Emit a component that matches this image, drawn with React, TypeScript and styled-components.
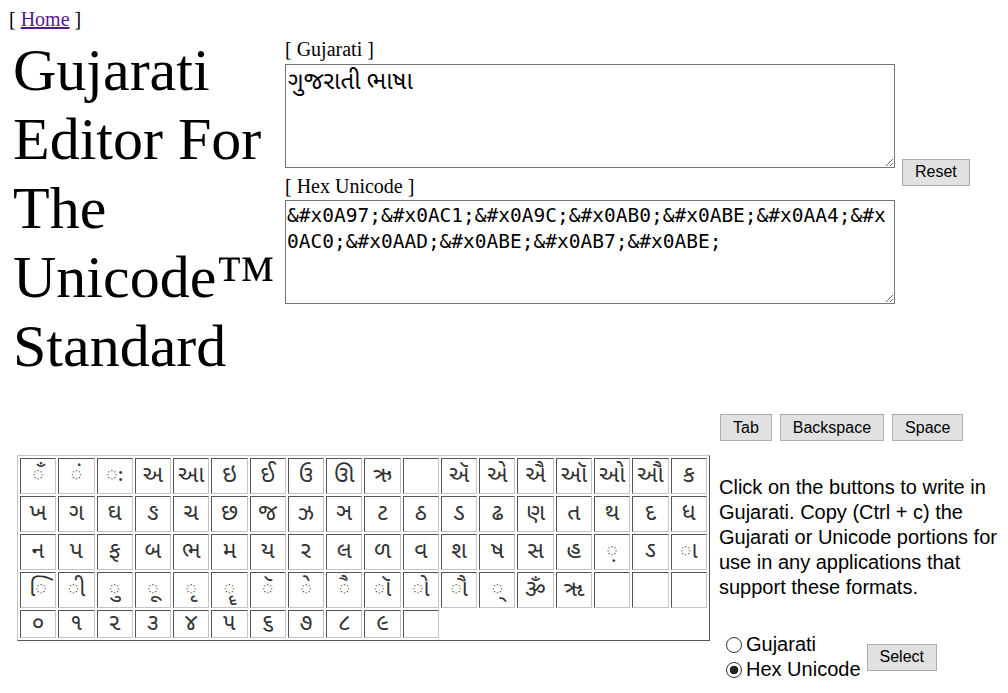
import React from 'react';
import styled, { createGlobalStyle } from 'styled-components';

const GlobalStyle = createGlobalStyle`
  html, body {
    margin: 0;
    padding: 0;
  }
  body {
    margin: 8px;
    font-family: "Liberation Serif", "Times New Roman", serif;
    font-size: 20px;
    color: #000;
    background: #fff;
  }
`;

const GUJ = '"Noto Sans Gujarati", "Lohit Gujarati", "Shruti", "Noto Sans", sans-serif';

const Nav = styled.div`
  line-height: 23px;
  padding-left: 1px;
`;

const HomeLink = styled.a`
  color: #551a8b;
  text-decoration: underline;
`;

const TopRow = styled.div`
  display: flex;
  align-items: flex-start;
  margin-top: 5px;
`;

const Title = styled.h1`
  margin: 0;
  width: 272px;
  padding-left: 5px;
  font-size: 60px;
  font-weight: normal;
  line-height: 69px;
`;

const EditorBlock = styled.div`
  display: flex;
  align-items: center;
  gap: 7px;
`;

const EditorColumn = styled.div`
  display: flex;
  flex-direction: column;
  padding-top: 2px;
  width: 610px;
`;

const FieldLabel = styled.div<{ $top?: number; $bottom?: number }>`
  line-height: 23px;
  margin-top: ${(p) => p.$top ?? 0}px;
  margin-bottom: ${(p) => p.$bottom ?? 3}px;
`;

const TextBox = styled.textarea<{ $mono?: boolean }>`
  display: block;
  box-sizing: border-box;
  width: 610px;
  height: 104px;
  margin: 0;
  padding: ${(p) => (p.$mono ? '2px 1px' : '2px')};
  border: 1px solid #767676;
  font-family: ${(p) => (p.$mono ? '"DejaVu Sans Mono", "Liberation Mono", monospace' : GUJ)};
  font-size: ${(p) => (p.$mono ? '19.5px' : '24px')};
  line-height: ${(p) => (p.$mono ? '26px' : '32px')};
  color: #000;
  word-break: break-all;
  resize: both;
`;

const Button = styled.button`
  box-sizing: border-box;
  height: 27px;
  padding: 0 12px;
  border: 1px solid #adadad;
  background: #e1e1e1;
  font-family: "Liberation Sans", Arial, sans-serif;
  font-size: 16px;
  color: #000;
  cursor: pointer;
`;

const ResetButton = styled(Button)`
  margin-top: 4px;
`;

const Lower = styled.div`
  display: grid;
  grid-template-columns: 693px 1fr;
  column-gap: 9px;
  row-gap: 14px;
  padding-left: 9px;
  margin-top: 33px;
`;

const KeyActions = styled.div`
  grid-column: 2;
  display: flex;
  gap: 8px;
  padding-left: 1px;
`;

const Keyboard = styled.table`
  width: 693px;
  table-layout: fixed;
  border-spacing: 2px;
  border-style: solid;
  border-width: 1px;
  border-color: #c4c4c4 #555 #555 #c4c4c4;
  align-self: start;
`;

const Key = styled.td<{ $short?: boolean }>`
  height: ${(p) => (p.$short ? 26 : 34)}px;
  padding: 0;
  border-style: solid;
  border-width: 1px;
  border-color: #555 #c4c4c4 #c4c4c4 #555;
  text-align: center;
  vertical-align: middle;
  font-family: ${GUJ};
  font-size: 23px;
  line-height: 26px;
  color: #333;
  cursor: pointer;
`;

const Side = styled.div`
  font-family: "Liberation Sans", Arial, sans-serif;
  font-size: 20px;
  line-height: 25px;
`;

const Help = styled.p`
  margin: 20px 0 0;
`;

const Output = styled.div`
  display: flex;
  align-items: center;
  gap: 6px;
  margin-top: 32px;
  padding-left: 7px;
`;

const RadioGroup = styled.div`
  display: flex;
  flex-direction: column;
`;

const RadioLabel = styled.label`
  display: flex;
  align-items: center;
  gap: 4px;
  height: 25px;
`;

const Radio = styled.input`
  appearance: none;
  box-sizing: border-box;
  width: 16px;
  height: 16px;
  margin: 0;
  border: 1px solid #333;
  border-radius: 50%;
  background: #fff;
  &:checked {
    background: radial-gradient(circle, #222 0 4px, #fff 4.6px);
  }
`;

const dc = '\u25CC';

const keys: string[][] = [
  [dc + 'ઁ', dc + 'ં', dc + 'ઃ', 'અ', 'આ', 'ઇ', 'ઈ', 'ઉ', 'ઊ', 'ઋ', '', 'ઍ', 'એ', 'ઐ', 'ઑ', 'ઓ', 'ઔ', 'ક'],
  ['ખ', 'ગ', 'ઘ', 'ઙ', 'ચ', 'છ', 'જ', 'ઝ', 'ઞ', 'ટ', 'ઠ', 'ડ', 'ઢ', 'ણ', 'ત', 'થ', 'દ', 'ધ'],
  ['ન', 'પ', 'ફ', 'બ', 'ભ', 'મ', 'ય', 'ર', 'લ', 'ળ', 'વ', 'શ', 'ષ', 'સ', 'હ', dc + '઼', 'ઽ', dc + 'ા'],
  [dc + 'િ', dc + 'ી', dc + 'ુ', dc + 'ૂ', dc + 'ૃ', dc + 'ૄ', dc + 'ૅ', dc + 'ે', dc + 'ૈ', dc + 'ૉ', dc + 'ો', dc + 'ૌ', dc + '્', 'ૐ', 'ૠ', '', '', ''],
  ['૦', '૧', '૨', '૩', '૪', '૫', '૬', '૭', '૮', '૯', ''],
];

const toHex = (s: string) =>
  Array.from(s)
    .filter((c) => c !== ' ')
    .map((c) => '&#x' + c.codePointAt(0)!.toString(16).toUpperCase().padStart(4, '0') + ';')
    .join('');

const App: React.FC = () => {
  const [text, setText] = React.useState('ગુજરાતી ભાષા');
  const [mode, setMode] = React.useState<'guj' | 'hex'>('hex');

  const press = (k: string) => setText((t) => t + k.replace(dc, ''));

  return (
    <>
      <GlobalStyle />
      <Nav>
        [ <HomeLink href="#">Home</HomeLink> ]
      </Nav>
      <TopRow>
        <Title>Gujarati Editor For The Unicode™ Standard</Title>
        <EditorBlock>
          <EditorColumn>
            <FieldLabel>[ Gujarati ]</FieldLabel>
            <TextBox value={text} onChange={(e) => setText(e.target.value)} />
            <FieldLabel $top={7} $bottom={2}>
              [ Hex Unicode ]
            </FieldLabel>
            <TextBox $mono readOnly value={toHex(text)} />
          </EditorColumn>
          <ResetButton onClick={() => setText('')}>Reset</ResetButton>
        </EditorBlock>
      </TopRow>
      <Lower>
        <KeyActions>
          <Button onClick={() => setText((t) => t + '\t')}>Tab</Button>
          <Button onClick={() => setText((t) => t.slice(0, -1))}>Backspace</Button>
          <Button onClick={() => setText((t) => t + ' ')}>Space</Button>
        </KeyActions>
        <Keyboard>
          <tbody>
            {keys.map((row, i) => (
              <tr key={i}>
                {row.map((k, j) => (
                  <Key key={j} $short={i === keys.length - 1} onClick={() => k && press(k)}>
                    {k}
                  </Key>
                ))}
              </tr>
            ))}
          </tbody>
        </Keyboard>
        <Side>
          <Help>
            Click on the buttons to write in Gujarati. Copy (Ctrl + c) the Gujarati or Unicode portions for use in any
            applications that support these formats.
          </Help>
          <Output>
            <RadioGroup>
              <RadioLabel>
                <Radio type="radio" name="fmt" checked={mode === 'guj'} onChange={() => setMode('guj')} />
                Gujarati
              </RadioLabel>
              <RadioLabel>
                <Radio type="radio" name="fmt" checked={mode === 'hex'} onChange={() => setMode('hex')} />
                Hex Unicode
              </RadioLabel>
            </RadioGroup>
            <Button>Select</Button>
          </Output>
        </Side>
      </Lower>
    </>
  );
};

export default App;
